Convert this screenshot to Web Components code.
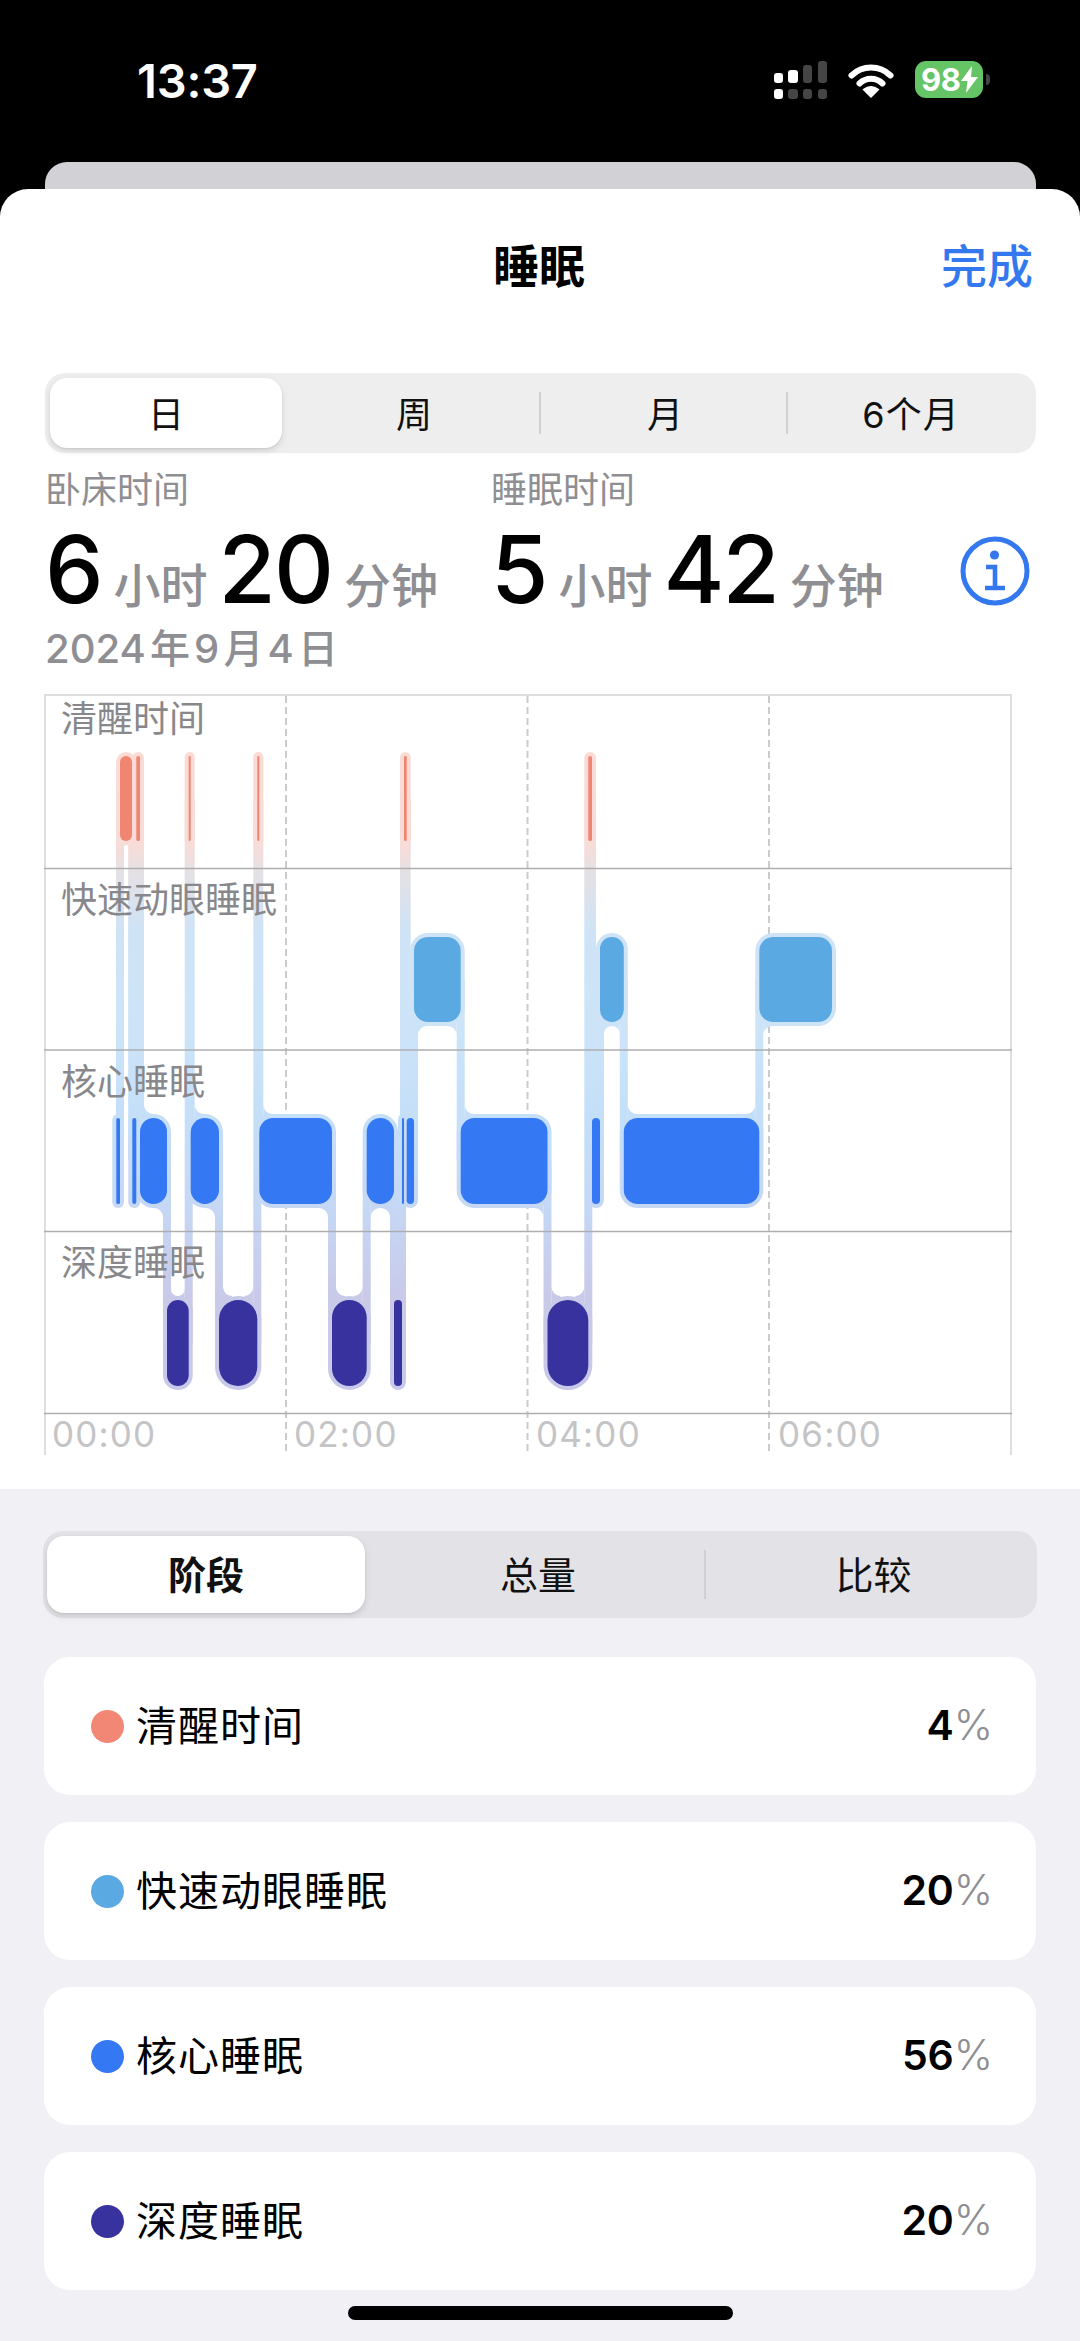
<!DOCTYPE html>
<html lang="zh">
<head>
<meta charset="utf-8">
<title>睡眠</title>
<style>
  html, body { margin: 0; padding: 0; background: #000; overflow: hidden; }
  body { width: 1080px; height: 2341px; font-family: Inter, "Noto Sans CJK SC", sans-serif; }
</style>
</head>
<body>
<status-bar></status-bar>
<sheet-page>
  <sheet-nav title="睡眠" action="完成"></sheet-nav>
  <seg-control style="--cols:232px 258px 247px 244px; --h:80px; --bg:#eeeeef; --inset:5px 5px; --mx:45px; --w:991px; --pb:2px">
    <seg-item selected>日</seg-item>
    <seg-item style="padding-left:6px">周</seg-item>
    <seg-item sep style="padding-left:3px">月</seg-item>
    <seg-item sep style="padding-left:4px;letter-spacing:1px">6个月</seg-item>
  </seg-control>
  <stat-row>
    <sleep-stat hours="6" mins="20">卧床时间</sleep-stat>
    <sleep-stat hours="5" mins="42">睡眠时间</sleep-stat>
  </stat-row>
  <date-line>2024 年 9 月 4 日</date-line>
  <sleep-chart></sleep-chart>
</sheet-page>
<lower-panel>
  <seg-control strong style="--cols:318px 340px 327px; --h:87px; --bg:#e2e2e7; --inset:5px 4px; --mx:43px; --w:994px; --fs:38px; --pb:4px">
    <seg-item selected strong>阶段</seg-item>
    <seg-item style="padding-left:6px">总量</seg-item>
    <seg-item sep style="padding-left:10px">比较</seg-item>
  </seg-control>
  <stage-list>
    <stage-row color="#f18774" value="4">清醒时间</stage-row>
    <stage-row color="#5aa9e2" value="20">快速动眼睡眠</stage-row>
    <stage-row color="#3478f3" value="56">核心睡眠</stage-row>
    <stage-row color="#37329d" value="20">深度睡眠</stage-row>
  </stage-list>
  <home-bar></home-bar>
</lower-panel>

<script>
class StatusBar extends HTMLElement {
  constructor() {
    super();
    const shadow = this.attachShadow({ mode: "open" });
    shadow.innerHTML = `
      <style>
        :host { display: block; height: 162px; position: relative; color: #fff; }
        .bar { display: flex; align-items: flex-start; height: 100%; box-sizing: border-box; padding: 0 90px 0 137px; }
        .time { font-size: 47px; font-weight: 600; line-height: 47px; margin-top: 57px; letter-spacing: -.2px; flex: 1; }
        .icons { display: flex; align-items: flex-start; margin-top: 61px; }
        .batt { width: 68px; height: 37px; border-radius: 11px; background: #65c466; margin-left: 21px;
          display: flex; align-items: center; padding-left: 6px; box-sizing: border-box;
          font-size: 31px; font-weight: 700; letter-spacing: -.5px; }
        .batt svg { margin-left: 1px; }
        .nub { width: 4px; height: 11px; margin: 13px 0 0 3px; background: #444; border-radius: 0 4px 4px 0; }
      </style>
      <div class="bar">
        <div class="time">13:37</div>
        <div class="icons">
          <svg width="54" height="38" viewBox="0 0 54 38" style="margin-top:0">
            <g fill="#fff">
              <rect x="0" y="12" width="9" height="10" rx="3"/>
              <rect x="14" y="9" width="10" height="13" rx="3"/>
              <rect x="0" y="28" width="9" height="10" rx="3"/>
            </g>
            <g fill="#454545">
              <rect x="29" y="4" width="9" height="18" rx="3"/>
              <rect x="44" y="0" width="9" height="22" rx="3"/>
              <rect x="14" y="28" width="10" height="10" rx="3"/>
              <rect x="29" y="28" width="9" height="10" rx="3"/>
              <rect x="44" y="28" width="9" height="10" rx="3"/>
            </g>
          </svg>
          <svg width="46" height="36" viewBox="0 0 46 36" style="margin:1px 0 0 20px">
            <g fill="none" stroke="#fff" stroke-width="6" stroke-linecap="round">
              <path d="M3.500 13.500a28 28 0 0 1 39 0"/>
              <path d="M11.500 21.500a16.500 16.500 0 0 1 23 0"/>
            </g>
            <path d="M23 35 15.500 27.500Q23 22 30.500 27.500Z" fill="#fff" stroke="#fff" stroke-width="1.500" stroke-linejoin="round"/>
          </svg>
          <div class="batt">98<svg width="17" height="27" viewBox="0 0 17 27"><path d="M11 0 0 15h6.500L5 27 17 11h-7z" fill="#fff"/></svg></div>
          <div class="nub"></div>
        </div>
      </div>
    `;
  }
}

class SheetPage extends HTMLElement {
  constructor() {
    super();
    const shadow = this.attachShadow({ mode: "open" });
    shadow.innerHTML = `
      <style>
        :host { display: block; }
        .back { height: 27px; margin: 0 44px 0 45px; background: #d1d1d6; border-radius: 22px 22px 0 0; }
        .front { background: #fff; border-radius: 28px 28px 0 0; height: 1300px; overflow: hidden; }
      </style>
      <div class="back"></div>
      <div class="front"><slot></slot></div>
    `;
  }
}

class SheetNav extends HTMLElement {
  constructor() {
    super();
    this.attachShadow({ mode: "open" });
  }
  connectedCallback() {
    this.shadowRoot.innerHTML = `
      <style>
        :host { display: grid; grid-template-columns: 1fr auto 1fr; align-items: start; height: 184px; padding: 0 47px 0 45px; box-sizing: border-box; }
        .title { font-size: 46px; font-weight: 700; color: #000; }
        .action { font-size: 46px; font-weight: 500; color: #3478f0; justify-self: end; }
        div, span { line-height: 154px; }
      </style>
      <span></span>
      <div class="title">${this.getAttribute("title")}</div>
      <div class="action">${this.getAttribute("action")}</div>
    `;
    this.removeAttribute("title");
  }
}

class SegControl extends HTMLElement {
  constructor() {
    super();
    const shadow = this.attachShadow({ mode: "open" });
    shadow.innerHTML = `
      <style>
        :host { display: block; margin: 0 var(--mx); width: var(--w); box-sizing: border-box; }
        .track { display: grid; grid-template-columns: var(--cols); height: var(--h); padding: var(--inset);
          box-sizing: border-box; background: var(--bg); border-radius: 20px; }
      </style>
      <div class="track"><slot></slot></div>
    `;
  }
}

class SegItem extends HTMLElement {
  constructor() {
    super();
    const shadow = this.attachShadow({ mode: "open" });
    shadow.innerHTML = `
      <style>
        :host { display: flex; align-items: center; justify-content: center; position: relative; box-sizing: border-box;
          font-size: var(--fs, 36px); color: #111; border-radius: 17px; padding-bottom: var(--pb, 0); }
        :host([selected]) { background: #fff; box-shadow: 0 3px 7px rgba(0,0,0,.11), 0 1px 2px rgba(0,0,0,.08); }
        :host([strong]) { font-weight: 700; }
        :host([sep])::before { content: ""; position: absolute; left: -1px; top: 14px; bottom: 14px; width: 2px; background: #d0d0d3; }
      </style>
      <slot></slot>
    `;
  }
}

class StatRow extends HTMLElement {
  constructor() {
    super();
    const shadow = this.attachShadow({ mode: "open" });
    shadow.innerHTML = `
      <style>
        :host { display: flex; align-items: flex-start; padding-left: 45px; margin-top: 19px; height: 157px; }
        svg { margin: 64px 0 0 23px; }
      </style>
      <slot></slot>
      <svg width="70" height="70" viewBox="0 0 70 70">
        <circle cx="35" cy="35" r="32" fill="none" stroke="#3478f0" stroke-width="5"/>
        <circle cx="34.500" cy="19" r="4.600" fill="#3478f0"/>
        <path d="M26 31h9v21M25 52h20" fill="none" stroke="#3478f0" stroke-width="4.600"/>
      </svg>
    `;
  }
}

class SleepStat extends HTMLElement {
  constructor() {
    super();
    this.attachShadow({ mode: "open" });
  }
  connectedCallback() {
    this.shadowRoot.innerHTML = `
      <style>
        :host { display: block; width: 446px; flex: none; }
        .label { font-size: 36px; line-height: 36px; color: #8e8e93; font-weight: 400; }
        .value { display: flex; align-items: baseline; margin-top: 14px; line-height: 94px; color: #000; }
        .num { font-size: 93px; font-weight: 500; letter-spacing: -2px; }
        .unit { font-size: 47px; font-weight: 500; color: #8e8e93; margin: 0 11px 0 12px; letter-spacing: 0; }
      </style>
      <div class="label"><slot></slot></div>
      <div class="value">
        <span class="num">${this.getAttribute("hours")}</span><span class="unit">小时</span>
        <span class="num">${this.getAttribute("mins")}</span><span class="unit">分钟</span>
      </div>
    `;
  }
}

class DateLine extends HTMLElement {
  constructor() {
    super();
    const shadow = this.attachShadow({ mode: "open" });
    shadow.innerHTML = `
      <style>
        :host { display: block; padding-left: 45px; font-size: 40px; line-height: 40px; font-weight: 500;
          color: #8e8e93; word-spacing: -6.500px; height: 65px; }
      </style>
      <slot></slot>
    `;
  }
}

// awake / rem / core / deep rows, page y coords of the solid blocks
const ROWS = {
  a: { y0: 757, y1: 842, fill: "#f08571" },
  r: { y0: 938, y1: 1023, fill: "#5aa9e2" },
  c: { y0: 1119, y1: 1205, fill: "#3478f3" },
  d: { y0: 1301, y1: 1387, fill: "#37329d" },
};
const SEGMENTS = [
  ["c",116.3,120],["a",120,132],["c",132.3,136.3],["a",136.3,140],["c",140,167],["d",167,188.7],
  ["a",188.7,190.7],["c",190.7,219],["d",219,257.3],["a",257.3,259.3],["c",259.3,332],["d",332,366.7],
  ["c",366.7,394],["d",394,402],["c",402,404],["a",404,406.7],["c",406.7,414],["r",414,460.7],
  ["c",460.7,547.5],["d",547.5,588.3],["a",588.3,592],["c",592,600],["r",600,623.8],["c",623.8,759.3],["r",759.3,832],
];

function fillet(x, y, dx, dy, r) {
  if (r <= 0) return "";
  return `<path d="M${x} ${y - dy * 6}L${x + dx * r} ${y - dy * 6}L${x + dx * r} ${y}A${r} ${r} 0 0 ${dx * dy > 0 ? 0 : 1} ${x} ${y + dy * r}Z"/>`;
}

function filletSize(w) {
  return Math.min(9, (w - 8) / 2);
}

function haloShapes() {
  let out = "";
  SEGMENTS.forEach(([k, x0, x1], i) => {
    const row = ROWS[k], w = x1 - x0;
    const rad = (w <= 42 ? w / 2 : 14) + 4;
    out += `<rect x="${x0 - 4}" y="${row.y0 - 4}" width="${w + 8}" height="${row.y1 - row.y0 + 8}" rx="${rad}"/>`;
    const next = SEGMENTS[i + 1];
    if (!next) return;
    const b = (x1 + next[1]) / 2;
    const nrow = ROWS[next[0]];
    const thisUp = row.y0 < nrow.y0;
    const up = thisUp ? row : nrow, low = thisUp ? nrow : row;
    const upW = thisUp ? w : next[2] - next[1];
    const lowW = thisUp ? next[2] - next[1] : w;
    const s = thisUp ? -1 : 1; // side of b on which the upper block sits
    const midUp = (up.y0 + up.y1) / 2, midLow = (low.y0 + low.y1) / 2;
    out += `<rect x="${b - 4}" y="${midUp}" width="8" height="${midLow - midUp}"/>`;
    out += fillet(b + s * 4, up.y1 + 4, s, 1, filletSize(upW));
    out += fillet(b - s * 4, low.y0 - 4, -s, -1, filletSize(lowW));
  });
  return out;
}

function blockShapes() {
  return SEGMENTS.map(([k, x0, x1]) => {
    const row = ROWS[k], w = x1 - x0;
    const rad = w <= 42 ? w / 2 : 14;
    return `<rect x="${x0}" y="${row.y0}" width="${w}" height="${row.y1 - row.y0}" rx="${rad}" fill="${row.fill}"/>`;
  }).join("");
}

class SleepChart extends HTMLElement {
  constructor() {
    super();
    const shadow = this.attachShadow({ mode: "open" });
    const ticks = [286, 527.5, 769];
    const lines = [869.5, 1051, 1232.5, 1414.5];
    shadow.innerHTML = `
      <style>
        :host { display: block; position: relative; width: 968px; margin-left: 44px; }
        svg { position: absolute; left: 0; top: 0; }
        .row { position: relative; box-sizing: border-box; font-size: 36px; line-height: 36px; color: #88888c; padding: 14px 0 0 17px; }
        .r1 { height: 174px; padding-top: 7px; }
        .r2 { height: 182px; }
        .r3 { height: 181px; }
        .r4 { height: 182px; }
        .times { position: relative; display: grid; grid-template-columns: 242px 242px 242px 242px; height: 42px; }
        .times span { font-size: 35px; line-height: 42px; color: #c4c4c6; padding-left: 8px; letter-spacing: 1.200px; }
      </style>
      <svg width="968" height="761" viewBox="44 695 968 761">
        <defs>
          <linearGradient id="halo" gradientUnits="userSpaceOnUse" x1="0" y1="753" x2="0" y2="1391">
            <stop offset="0" stop-color="#fcdbd5"/>
            <stop offset=".146" stop-color="#f7dcd8"/>
            <stop offset=".19" stop-color="#e4e1e4"/>
            <stop offset=".278" stop-color="#cfe3f6"/>
            <stop offset=".435" stop-color="#cde4f8"/>
            <stop offset=".568" stop-color="#c5dff9"/>
            <stop offset=".717" stop-color="#c5d7f4"/>
            <stop offset=".859" stop-color="#c9c9e8"/>
            <stop offset="1" stop-color="#c8c9ea"/>
          </linearGradient>
        </defs>
        <path d="M45 695V1456M1011 695V1456M44 696H1012" fill="none" stroke="#dedee0" stroke-width="2"/>
        ${ticks.map(x => `<path d="M${x} 697V1456" stroke="#cbcbcd" stroke-width="2" stroke-dasharray="7 4" fill="none"/>`).join("")}
        <g fill="url(#halo)">${haloShapes()}</g>
        ${lines.map(y => `<path d="M44 ${y}H1012" stroke="#aeaeb0" stroke-width="1.500" fill="none"/>`).join("")}
        ${blockShapes()}
      </svg>
      <div class="row r1">清醒时间</div>
      <div class="row r2">快速动眼睡眠</div>
      <div class="row r3">核心睡眠</div>
      <div class="row r4">深度睡眠</div>
      <div class="times"><span>00:00</span><span>02:00</span><span>04:00</span><span>06:00</span></div>
    `;
  }
}

class LowerPanel extends HTMLElement {
  constructor() {
    super();
    const shadow = this.attachShadow({ mode: "open" });
    shadow.innerHTML = `
      <style>
        :host { display: block; background: #f0f0f5; height: 852px; padding-top: 42px; box-sizing: border-box; }
      </style>
      <slot></slot>
    `;
  }
}

class StageList extends HTMLElement {
  constructor() {
    super();
    const shadow = this.attachShadow({ mode: "open" });
    shadow.innerHTML = `
      <style>
        :host { display: flex; flex-direction: column; gap: 27px; margin: 39px 44px 0 44px; }
      </style>
      <slot></slot>
    `;
  }
}

class StageRow extends HTMLElement {
  constructor() {
    super();
    this.attachShadow({ mode: "open" });
  }
  connectedCallback() {
    const color = this.getAttribute("color");
    this.shadowRoot.innerHTML = `
      <style>
        :host { display: flex; align-items: center; height: 138px; background: #fff; border-radius: 26px; padding: 0 44px 0 47px; box-sizing: border-box; color: #000; }
        .dot { width: 33px; height: 33px; border-radius: 50%; background: ${color}; margin-right: 12px; flex: none; }
        .name { font-size: 41px; flex: 1; letter-spacing: 1px; padding-bottom: 6px; }
        .val { font-size: 41px; font-weight: 600; letter-spacing: -.2px; padding-bottom: 3px; }
        .pct { color: #8e8e93; font-weight: 300; font-size: 42px; letter-spacing: -1px; }
      </style>
      <span class="dot"></span>
      <span class="name"><slot></slot></span>
      <span class="val">${this.getAttribute("value")}<span class="pct">%</span></span>
    `;
  }
}

class HomeBar extends HTMLElement {
  constructor() {
    super();
    const shadow = this.attachShadow({ mode: "open" });
    shadow.innerHTML = `
      <style>
        :host { display: block; width: 385px; height: 14px; margin: 16px 0 0 348px; background: #000; border-radius: 7px; }
      </style>
    `;
  }
}

customElements.define("status-bar", StatusBar);
customElements.define("sheet-page", SheetPage);
customElements.define("sheet-nav", SheetNav);
customElements.define("seg-control", SegControl);
customElements.define("seg-item", SegItem);
customElements.define("stat-row", StatRow);
customElements.define("sleep-stat", SleepStat);
customElements.define("date-line", DateLine);
customElements.define("sleep-chart", SleepChart);
customElements.define("lower-panel", LowerPanel);
customElements.define("stage-list", StageList);
customElements.define("stage-row", StageRow);
customElements.define("home-bar", HomeBar);
</script>
</body>
</html>
